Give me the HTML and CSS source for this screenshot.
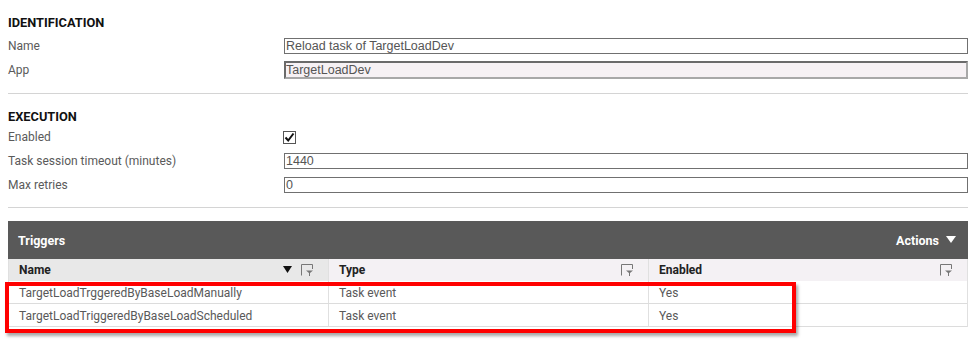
FILE: index.html
```html
<!DOCTYPE html>
<html>
<head>
<meta charset="utf-8">
<link rel="stylesheet" href="styles.css">
</head>
<body>
<div class="page">
  <section class="sec sec-ident">
    <h2 class="sec-title">IDENTIFICATION</h2>
    <div class="rows rows-ident">
      <div class="row"><span class="label">Name</span><div class="field"><div class="input">Reload task of TargetLoadDev</div></div></div>
      <div class="row"><span class="label">App</span><div class="field"><div class="input input-ro">TargetLoadDev</div></div></div>
    </div>
  </section>
  <hr class="divider divider-1">
  <section class="sec sec-exec">
    <h2 class="sec-title">EXECUTION</h2>
    <div class="rows">
      <div class="row"><span class="label">Enabled</span><div class="field"><span class="checkbox"><svg width="11" height="11" viewBox="0 0 11 11"><path d="M1.5 5.5 L4.2 8.5 L9.5 1.5" fill="none" stroke="#111" stroke-width="2"/></svg></span></div></div>
      <div class="row"><span class="label">Task session timeout (minutes)</span><div class="field"><div class="input">1440</div></div></div>
      <div class="row"><span class="label">Max retries</span><div class="field"><div class="input">0</div></div></div>
    </div>
  </section>
  <hr class="divider divider-2">
  <div class="panel">
    <div class="panel-bar">
      <span class="panel-title">Triggers</span>
      <span class="actions">Actions <svg width="10" height="8" viewBox="0 0 10 8"><path d="M0 0 H10 L5 7 Z" fill="#fff"/></svg></span>
    </div>
    <div class="table">
      <div class="thead">
        <div class="th th-sorted"><span class="th-text">Name</span><span class="th-icons"><svg width="9" height="8" viewBox="0 0 9 8"><path d="M0 0 H9 L4.5 7 Z" fill="#111"/></svg><svg class="filter" width="12" height="12" viewBox="0 0 12 12"><path d="M0.5 11.5 V0.5 H11.5 V5" fill="none" stroke="#777" stroke-width="1"/><path d="M5 6.5 H12 L9 9 V12 H8 V9 Z" fill="#777"/></svg></span></div>
        <div class="th"><span class="th-text">Type</span><span class="th-icons"><svg class="filter" width="12" height="12" viewBox="0 0 12 12"><path d="M0.5 11.5 V0.5 H11.5 V5" fill="none" stroke="#777" stroke-width="1"/><path d="M5 6.5 H12 L9 9 V12 H8 V9 Z" fill="#777"/></svg></span></div>
        <div class="th th-last"><span class="th-text">Enabled</span><span class="th-icons"><svg class="filter" width="12" height="12" viewBox="0 0 12 12"><path d="M0.5 11.5 V0.5 H11.5 V5" fill="none" stroke="#777" stroke-width="1"/><path d="M5 6.5 H12 L9 9 V12 H8 V9 Z" fill="#777"/></svg></span></div>
      </div>
      <div class="tr">
        <div class="td">TargetLoadTrggeredByBaseLoadManually</div>
        <div class="td">Task event</div>
        <div class="td td-last">Yes</div>
      </div>
      <div class="tr">
        <div class="td">TargetLoadTriggeredByBaseLoadScheduled</div>
        <div class="td">Task event</div>
        <div class="td td-last">Yes</div>
      </div>
      <div class="highlight"></div>
    </div>
  </div>
</div>
</body>
</html>
```

FILE: styles.css
```css
* { box-sizing: border-box; }
html, body { margin: 0; padding: 0; background: #fff; }
body {
  font-family: Roboto, "Liberation Sans", sans-serif;
  font-size: 12px;
  color: #595959;
  min-height: 341px;
}
.page {
  width: 960px;
  margin-left: 8px;
  padding-bottom: 14px;
}
.sec-title {
  margin: 0;
  height: 16px;
  line-height: 16px;
  font-size: 12.8px;
  font-weight: 700;
  color: #111;
}
.sec-ident { padding-top: 15px; }
.rows-ident { margin-top: 3px; }
.sec-exec { padding-top: 15px; }
.row {
  display: grid;
  grid-template-columns: 276px 1fr;
  height: 24px;
  align-items: center;
}
.label {
  line-height: 16px;
  color: #5a5a5a;
}
.field { display: flex; align-items: center; }
.input {
  width: 100%;
  height: 16px;
  border: 1px solid #707070;
  font-family: "Liberation Sans", Arial, sans-serif;
  font-size: 12.5px;
  line-height: 14px;
  color: #555;
  padding-left: 1px;
  background: #fff;
}
.input-ro {
  height: 18px;
  line-height: 14px;
  border-style: solid;
  border-width: 2px;
  border-color: #6a6a6a #a8a8a8 #a8a8a8 #6a6a6a;
  background: #f6f1f4;
  padding-left: 0;
}
.checkbox {
  width: 13px;
  height: 13px;
  border: 1px solid #555;
  display: flex;
  align-items: center;
  justify-content: center;
  background: #fff;
  margin-left: -1px;
}
.divider {
  border: 0;
  height: 1px;
  background: #d4d4d4;
  margin: 0;
}
.divider-1 { margin-top: 11px; }
.divider-2 { margin-top: 10px; }
.panel { margin-top: 13px; }
.panel-bar {
  height: 38px;
  background: #595959;
  display: flex;
  align-items: center;
  justify-content: space-between;
  padding: 0 12px 0 10px;
  color: #fff;
  font-weight: 700;
  font-size: 12.5px;
}
.actions { display: flex; align-items: center; gap: 7px; }
.table { position: relative; border-left: 1px solid #e0e0e0; border-right: 1px solid #e0e0e0; }
.thead, .tr {
  display: grid;
  grid-template-columns: 320px 320px 1fr;
}
.thead { height: 22px; background: #f4f1f4; }
.th {
  display: flex;
  align-items: center;
  justify-content: space-between;
  padding: 0 15px 0 10px;
  border-right: 1px solid #e0e0e0;
  font-weight: 700;
  color: #222;
}
.th-sorted { background: #e8e8e8; }
.th-last { border-right: 0; }
.th-icons { display: flex; align-items: center; gap: 9px; }
.tr { height: 23px; border-bottom: 1px solid #dcdcdc; }
.td {
  display: flex;
  align-items: center;
  padding-left: 10px;
  padding-top: 1px;
  border-right: 1px solid #e0e0e0;
  color: #595959;
}
.td-last { border-right: 0; }
.highlight {
  position: absolute;
  left: -4px;
  top: 23px;
  width: 791px;
  height: 51px;
  border: 4px solid #ff0000;
  box-shadow: 2px 3px 3px rgba(0,0,0,0.35);
  pointer-events: none;
}
```
